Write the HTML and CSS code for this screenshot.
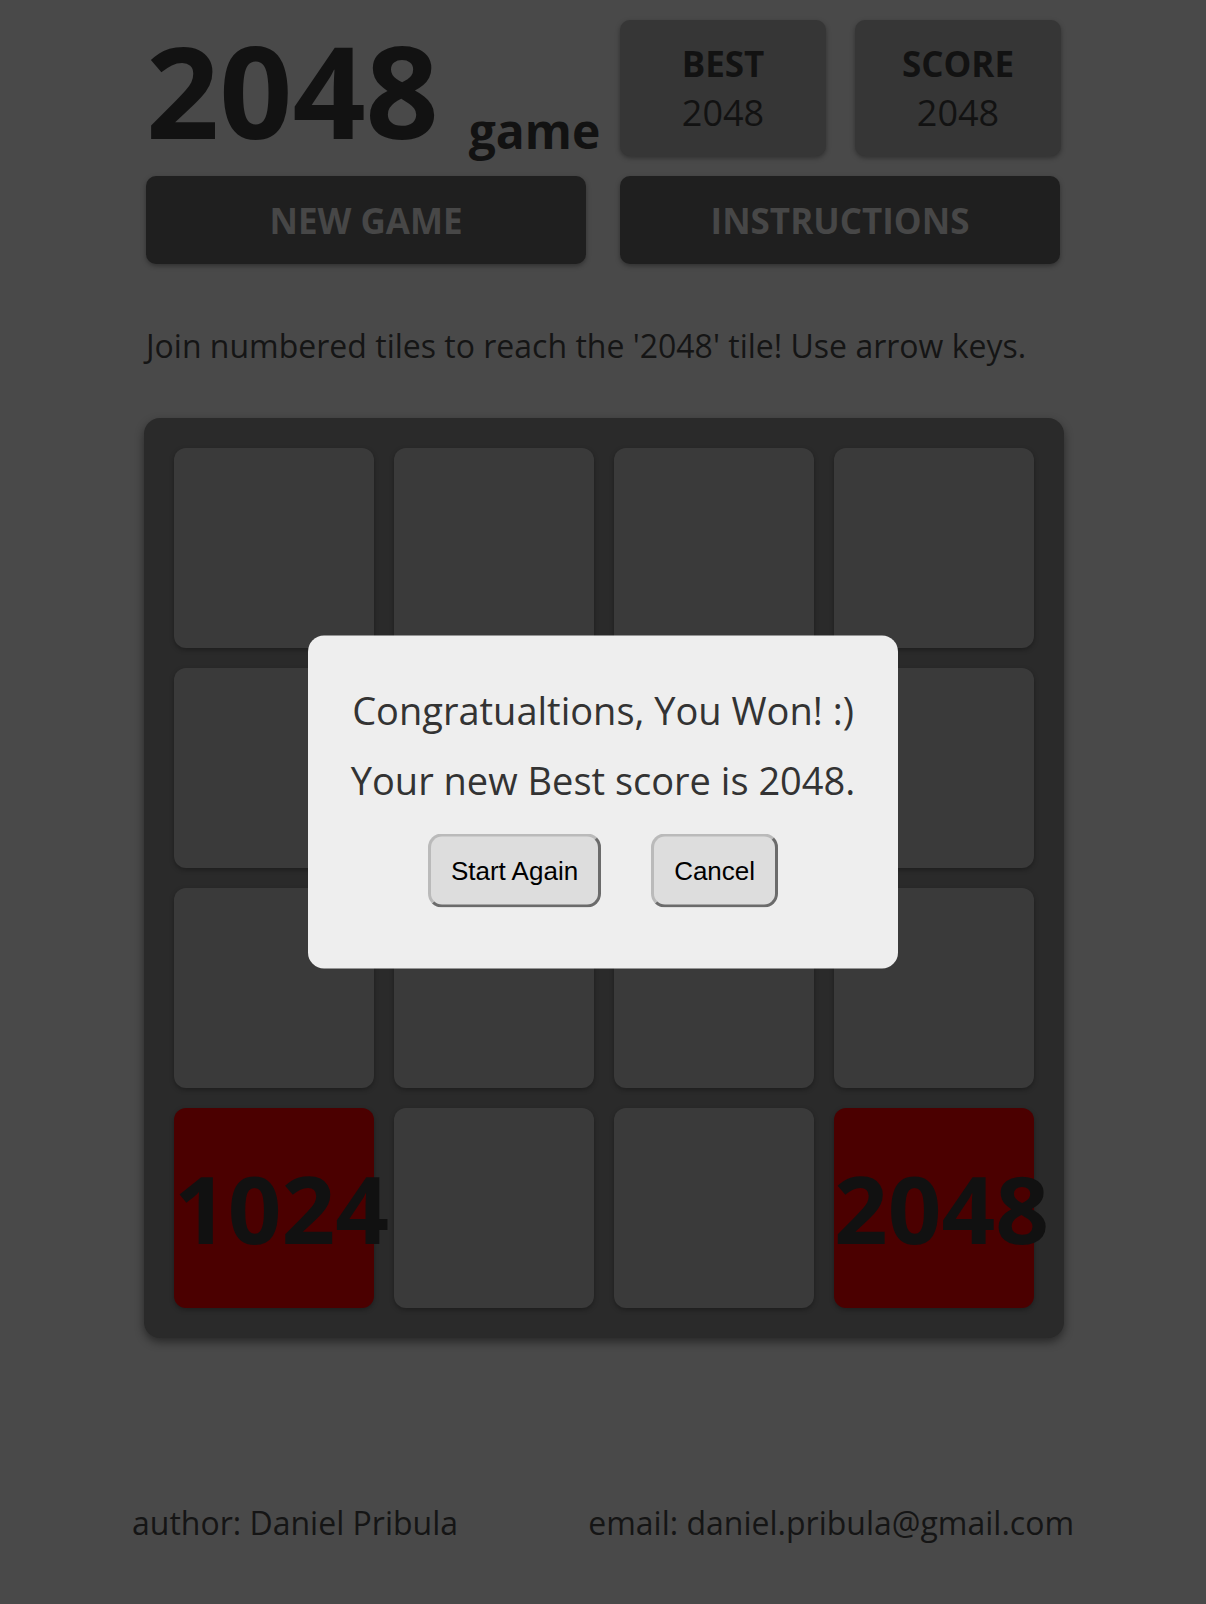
FILE: index.html
```html
<!DOCTYPE html>
<html lang="en">
<head>
<meta charset="utf-8">
<title>2048 game</title>
<link rel="stylesheet" href="styles.css">
</head>
<body>
<div class="page">
  <header class="header">
    <div class="top-row">
      <h1 class="title"><span class="title-num">2048</span><span class="title-sub">game</span></h1>
      <div class="scores">
        <div class="score-box"><div class="score-label">BEST</div><div class="score-value">2048</div></div>
        <div class="score-box"><div class="score-label">SCORE</div><div class="score-value">2048</div></div>
      </div>
    </div>
    <div class="actions">
      <button class="action-btn">NEW GAME</button>
      <button class="action-btn">INSTRUCTIONS</button>
    </div>
  </header>
  <p class="desc">Join numbered tiles to reach the '2048' tile! Use arrow keys.</p>
  <div class="board">
    <div class="tile"></div><div class="tile"></div><div class="tile"></div><div class="tile"></div>
    <div class="tile"></div><div class="tile"></div><div class="tile"></div><div class="tile"></div>
    <div class="tile"></div><div class="tile"></div><div class="tile"></div><div class="tile"></div>
    <div class="tile tile-big"><span>1024</span></div><div class="tile"></div><div class="tile"></div><div class="tile tile-big"><span>2048</span></div>
  </div>
  <footer class="footer">
    <span>author: Daniel Pribula</span>
    <span>email: daniel.pribula@gmail.com</span>
  </footer>
</div>
<div class="modal">
  <p class="modal-text">Congratualtions, You Won! :)</p>
  <p class="modal-text modal-text-last">Your new Best score is 2048.</p>
  <div class="modal-actions">
    <button class="modal-btn">Start Again</button>
    <button class="modal-btn">Cancel</button>
  </div>
</div>
</body>
</html>
```
FILE: styles.css
```css
html, body {
  margin: 0;
  padding: 0;
}
body {
  background: #494949;
  font-family: "Open Sans", "DejaVu Sans", sans-serif;
  color: #151515;
  height: 1604px;
}
.page {
  width: 920px;
  margin: 0 auto;
}
.header {
  padding: 0 3px;
}
.top-row {
  display: flex;
  justify-content: space-between;
  height: 156px;
}
.title {
  margin: 0;
  padding-top: 2px;
  font-weight: 700;
  line-height: normal;
  white-space: nowrap;
  color: #121212;
}
.title-num {
  font-size: 128px;
}
.title-sub {
  font-size: 48px;
  margin-left: 30px;
  vertical-align: -10px;
}
.scores {
  display: flex;
  gap: 29px;
  padding-top: 20px;
  margin-right: -1px;
}
.score-box {
  width: 206px;
  height: 136px;
  background: #363636;
  border-radius: 10px;
  box-shadow: 0 2px 5px rgba(0, 0, 0, 0.35);
  display: flex;
  flex-direction: column;
  align-items: center;
  justify-content: center;
  color: #121212;
}
.score-label {
  font-size: 35px;
  font-weight: 700;
  line-height: 48px;
}
.score-value {
  font-size: 36px;
  font-weight: 400;
  line-height: 49px;
}
.actions {
  display: grid;
  grid-template-columns: 440px 440px;
  column-gap: 34px;
  margin-top: 20px;
}
.action-btn {
  height: 88px;
  border: 0;
  border-radius: 10px;
  background: #1f1f1f;
  color: #474747;
  font-family: "Open Sans", "DejaVu Sans", sans-serif;
  font-size: 35px;
  font-weight: 700;
  box-shadow: 0 2px 5px rgba(0, 0, 0, 0.35);
  padding: 0;
}
.desc {
  margin: 60px 0 51px;
  padding: 0 3px;
  font-size: 32px;
  line-height: normal;
  color: #151515;
}
.board {
  width: 920px;
  height: 920px;
  box-sizing: border-box;
  margin-left: 1px;
  padding: 30px;
  background: #2a2a2a;
  border-radius: 16px;
  box-shadow: 0 4px 10px rgba(0, 0, 0, 0.45);
  display: grid;
  grid-template-columns: repeat(4, 200px);
  grid-template-rows: repeat(4, 200px);
  gap: 20px;
}
.tile {
  background: #3a3a3a;
  border-radius: 12px;
  box-shadow: 0 2px 5px rgba(0, 0, 0, 0.3);
}
.tile-big {
  background: #4b0000;
  display: flex;
  align-items: center;
  font-size: 94px;
  font-weight: 700;
  line-height: normal;
  color: #111111;
  white-space: nowrap;
}
.footer {
  display: flex;
  justify-content: space-between;
  margin: 163px -11px 0;
  font-size: 32px;
  line-height: normal;
  color: #151515;
}
.modal {
  position: fixed;
  top: 50%;
  left: 50%;
  transform: translate(-50%, -50%);
  width: 590px;
  box-sizing: border-box;
  padding: 50px 0 61px;
  background: #eeeeee;
  border-radius: 16px;
  text-align: center;
}
.modal-text {
  margin: 0 0 21px;
  font-size: 38px;
  line-height: 49px;
  color: #333333;
  white-space: nowrap;
}
.modal-text-last {
  margin-bottom: 29px;
}
.modal-actions {
  display: flex;
  justify-content: center;
  gap: 50px;
}
.modal-btn {
  font-family: "Liberation Sans", Arial, sans-serif;
  font-size: 26px;
  line-height: 30px;
  color: #000;
  background: #dddddd;
  padding: 19px 20px;
  border: 3px solid;
  border-color: #bababa #6b6b6b #6b6b6b #bababa;
  border-radius: 14px;
}
```
